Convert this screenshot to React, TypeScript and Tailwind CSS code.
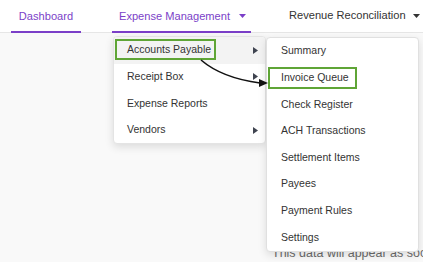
import React from "react";

const Caret = () => (
  <svg width="5" height="7" viewBox="0 0 5 7" className="shrink-0">
    <path d="M0 0 L5 3.5 L0 7 Z" fill="#3f4450" />
  </svg>
);

const DownCaret = ({ color }: { color: string }) => (
  <svg width="7" height="4" viewBox="0 0 7 4" className="shrink-0">
    <path d="M0 0 L7 0 L3.5 4 Z" fill={color} />
  </svg>
);

const menu1 = [
  { label: "Accounts Payable", sub: true, active: true },
  { label: "Receipt Box", sub: true },
  { label: "Expense Reports", sub: false },
  { label: "Vendors", sub: true },
];

const menu2 = [
  "Summary",
  "Invoice Queue",
  "Check Register",
  "ACH Transactions",
  "Settlement Items",
  "Payees",
  "Payment Rules",
  "Settings",
];

export default function App() {
  return (
    <div
      className="relative w-[423px] h-[262px] overflow-hidden bg-[#f9f9f9]"
      style={{ fontFamily: '"Liberation Sans", Arial, sans-serif' }}
    >
      {/* Top nav */}
      <div className="flex h-[33px] items-stretch bg-white border-b border-[#e6e6e6] pl-[11px] gap-[31px] text-[11.1px] whitespace-nowrap">
        <div className="flex shrink-0 w-[70px] justify-center items-center pt-[1px] border-b-[2px] border-[#7b3fc8] text-[#7b3fc8] -mb-px">
          Dashboard
        </div>
        <div className="flex shrink-0 w-[139px] items-center gap-[9px] pl-[7px] pt-[1px] border-b-[2px] border-[#7b3fc8] text-[#7b3fc8] -mb-px">
          <span>Expense Management</span>
          <DownCaret color="#7b3fc8" />
        </div>
        <div className="flex shrink-0 items-center gap-[7px] pl-[7px] pt-[1px] pb-[2px] text-[#333333]">
          <span>Revenue Reconciliation</span>
          <DownCaret color="#333333" />
        </div>
      </div>

      {/* Page content */}
      <div className="pl-[272px] pt-[213px] text-[12.5px] leading-[14px] text-[#6b6b6b] whitespace-nowrap">
        This data will appear as soon as it is available
      </div>

      {/* Menu 1 */}
      <div className="absolute left-[113px] top-[36px] w-[153px] bg-white rounded-[4px] border border-[#e4e4e4] shadow-[0_3px_8px_rgba(0,0,0,0.12)] overflow-hidden">
        {menu1.map((m) => (
          <div
            key={m.label}
            className={`flex h-[26.6px] items-center justify-between pl-[13px] pr-[7px] text-[10.5px] text-[#333333] whitespace-nowrap ${
              m.active ? "bg-[#f3f3f3]" : ""
            }`}
          >
            <span>{m.label}</span>
            {m.sub && <Caret />}
          </div>
        ))}
      </div>

      {/* Menu 2 */}
      <div className="absolute left-[266px] top-[37px] w-[153px] bg-white rounded-[4px] border border-[#e0e0e0] shadow-[0_3px_8px_rgba(0,0,0,0.12)] overflow-hidden">
        {menu2.map((m) => (
          <div
            key={m}
            className="flex h-[26.6px] items-center pl-[14px] text-[10.5px] text-[#333333] whitespace-nowrap"
          >
            {m}
          </div>
        ))}
      </div>

      {/* Annotation highlights */}
      <div className="absolute left-[115px] top-[39px] w-[101px] h-[21px] border-2 border-[#5fa536]" />
      <div className="absolute left-[268px] top-[67px] w-[89px] h-[22px] border-2 border-[#5fa536]" />

      {/* Annotation arrow */}
      <svg
        className="absolute left-0 top-0 pointer-events-none"
        width="423"
        height="262"
        viewBox="0 0 423 262"
      >
        <path
          d="M201 60 Q 222 78 260 83"
          fill="none"
          stroke="#111"
          strokeWidth="1.6"
        />
        <path d="M259 79 L268 83 L259 87 Z" fill="#111" />
      </svg>
    </div>
  );
}
